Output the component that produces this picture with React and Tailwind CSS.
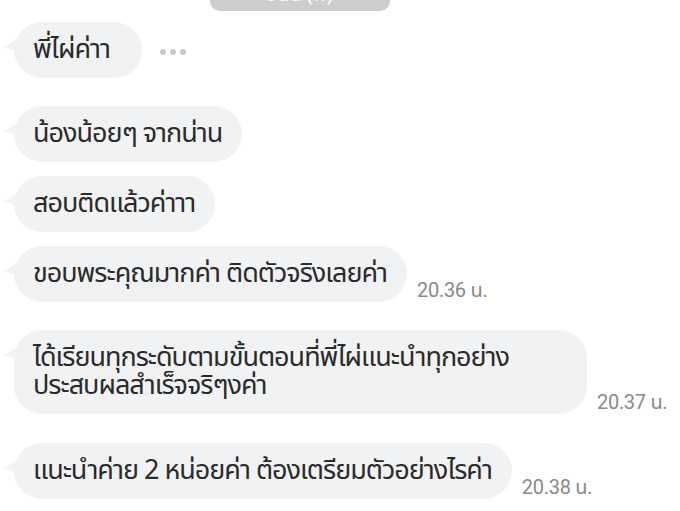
import React from 'react';

const font = { fontFamily: '"Noto Sans Thai", "Roboto", "Noto Sans", sans-serif' };

function Tail() {
  return (
    <svg
      className="absolute left-[-11px] top-[15px]"
      width="14"
      height="16"
      viewBox="0 0 14 16"
    >
      <path d="M14 2 C9 6 5 8 0 10 C5 11 10 13 14 15 Z" fill="#f1f2f4" />
    </svg>
  );
}

function Bubble({ children, time, extra, className = '', boxClass = '' }) {
  return (
    <div className={'flex items-end ' + className}>
      <div
        className={
          'relative rounded-[28px] bg-[#f1f2f4] pl-[19px] pr-[20px] py-[14px] text-[27px] leading-[28px] tracking-[-1px] text-[#2b2b2b] ' +
          boxClass
        }
      >
        <Tail />
        {children}
      </div>
      {time && (
        <span
          className="ml-[10px] mb-[-3px] text-[20px] text-[#8a8a8a] tracking-[-0.3px]"
          style={{ fontFamily: 'Roboto, "Noto Sans Thai", sans-serif' }}
        >
          {time}
        </span>
      )}
      {extra}
    </div>
  );
}

export default function App() {
  return (
    <div className="w-[680px] h-[511px] overflow-hidden bg-white" style={font}>
      <div className="ml-[210px] w-[180px] h-[11px] overflow-hidden rounded-b-[10px] bg-[#cdcdcd]">
        <div className="mt-[-20px] text-center text-[20px] text-white">วันนี้ (พ)</div>
      </div>

      <div className="pl-[14px]">
        <Bubble
          className="mt-[11px]"
          boxClass="min-w-[128px]"
          extra={
            <div className="ml-[18px] mt-[3px] self-center flex gap-[4px]">
              <span className="h-[6px] w-[6px] rounded-full bg-[#c9c9c9]" />
              <span className="h-[6px] w-[6px] rounded-full bg-[#c9c9c9]" />
              <span className="h-[6px] w-[6px] rounded-full bg-[#c9c9c9]" />
            </div>
          }
        >
          พี่ไผ่ค่าา
        </Bubble>

        <Bubble className="mt-[28px]">น้องน้อยๆ จากน่าน</Bubble>
        <Bubble className="mt-[14px]">สอบติดแล้วค่าาา</Bubble>
        <Bubble className="mt-[14px]" time="20.36 น.">
          ขอบพระคุณมากค่า ติดตัวจริงเลยค่า
        </Bubble>
        <Bubble className="mt-[28px]" boxClass="w-[573px]" time="20.37 น.">
          ได้เรียนทุกระดับตามขั้นตอนที่พี่ไผ่แนะนำทุกอย่าง
          <br />
          ประสบผลสำเร็จจริๆงค่า
        </Bubble>
        <Bubble className="mt-[29px]" time="20.38 น.">
          แนะนำค่าย 2 หน่อยค่า ต้องเตรียมตัวอย่างไรค่า
        </Bubble>
      </div>
    </div>
  );
}
